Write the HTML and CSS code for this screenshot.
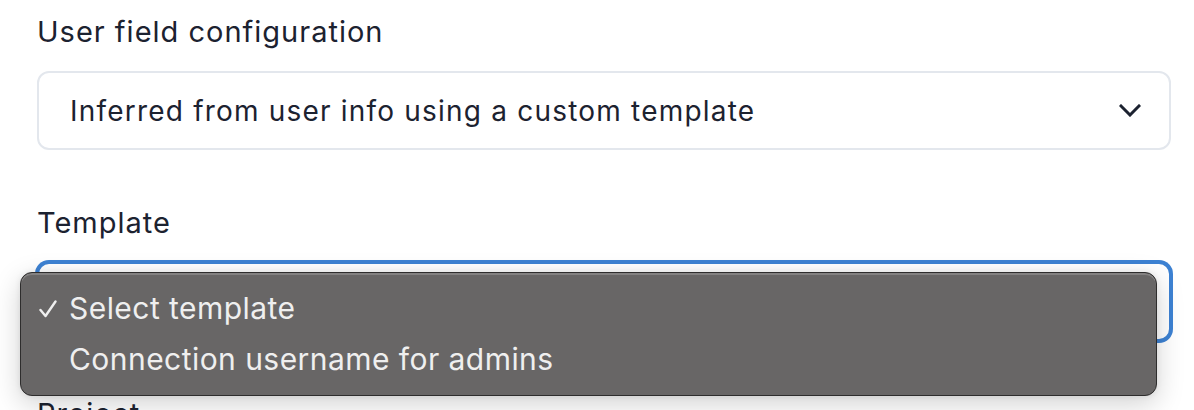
FILE: index.html
```html
<!DOCTYPE html>
<html lang="en">
<head>
<meta charset="utf-8">
<title>User field configuration</title>
<link rel="stylesheet" href="styles.css">
</head>
<body>
<div class="form">
  <div class="field">
    <label class="label">User field configuration</label>
    <div class="select">
      <span class="select-text">Inferred from user info using a custom template</span>
      <svg class="chevron" width="22" height="13" viewBox="0 0 22 13"><polyline points="2,2 11,11 20,2" fill="none" stroke="#1c2230" stroke-width="3" stroke-linecap="square"/></svg>
    </div>
  </div>
  <div class="field">
    <label class="label">Template</label>
    <div class="select focused">
      <span class="select-text">Select template</span>
      <svg class="chevron" width="22" height="13" viewBox="0 0 22 13"><polyline points="2,2 11,11 20,2" fill="none" stroke="#1c2230" stroke-width="3" stroke-linecap="square"/></svg>
    </div>
  </div>
  <div class="field">
    <label class="label">Project</label>
  </div>
</div>

<div class="menu">
  <div class="menu-item">
    <svg class="check" width="18" height="18" viewBox="0 0 18 18"><polyline points="1.5,10 6.5,16 16.5,1.5" fill="none" stroke="#efefef" stroke-width="2.4" stroke-linecap="round" stroke-linejoin="round"/></svg>
    <span>Select template</span>
  </div>
  <div class="menu-item">
    <span class="check-space"></span>
    <span>Connection username for admins</span>
  </div>
</div>
</body>
</html>
```

FILE: styles.css
```css
html, body {
  margin: 0;
  padding: 0;
  background: #ffffff;
  overflow: hidden;
}

body {
  width: 1194px;
  height: 410px;
  position: relative;
  font-family: "Inter", "Noto Sans", sans-serif;
  color: #1c2230;
}

.form {
  padding: 15px 23px 0 37px;
  display: flex;
  flex-direction: column;
  gap: 56px;
}

.field {
  display: flex;
  flex-direction: column;
  gap: 22px;
}

.label {
  display: block;
  font-size: 29px;
  line-height: 34px;
  letter-spacing: 1px;
  font-weight: 400;
  color: #1c2230;
}

.select {
  box-sizing: border-box;
  height: 79px;
  border: 2px solid #e3e7ed;
  border-radius: 12px;
  display: flex;
  align-items: center;
  justify-content: space-between;
  padding: 0 28px 0 31px;
  background: #fff;
}

.select.focused {
  border-color: #3d82d3;
  box-shadow: 0 0 0 2px #3d82d3;
}

.select-text {
  font-size: 28px;
  line-height: 34px;
  letter-spacing: 1.2px;
  color: #1c2230;
}

.chevron {
  display: block;
}

.menu {
  position: absolute;
  left: 20px;
  top: 272px;
  width: 1137px;
  height: 124px;
  box-sizing: border-box;
  padding: 9px 0 13px;
  background: #686666;
  border: 1px solid #2e2d2d;
  border-radius: 12px;
  box-shadow: inset 0 2px 0 rgba(255,255,255,0.18), 0 8px 28px rgba(0,0,0,0.18), 0 0 6px rgba(0,0,0,0.08);
}

.menu-item {
  height: 51px;
  display: flex;
  align-items: center;
  gap: 12px;
  padding-left: 18px;
  font-size: 30px;
  letter-spacing: 0.45px;
  color: #efefef;
  font-family: "Inter", "Noto Sans", sans-serif;
}

.check {
  display: block;
  width: 18px;
  height: 18px;
  margin-top: 3px;
}

.check-space {
  display: block;
  width: 18px;
}
```
